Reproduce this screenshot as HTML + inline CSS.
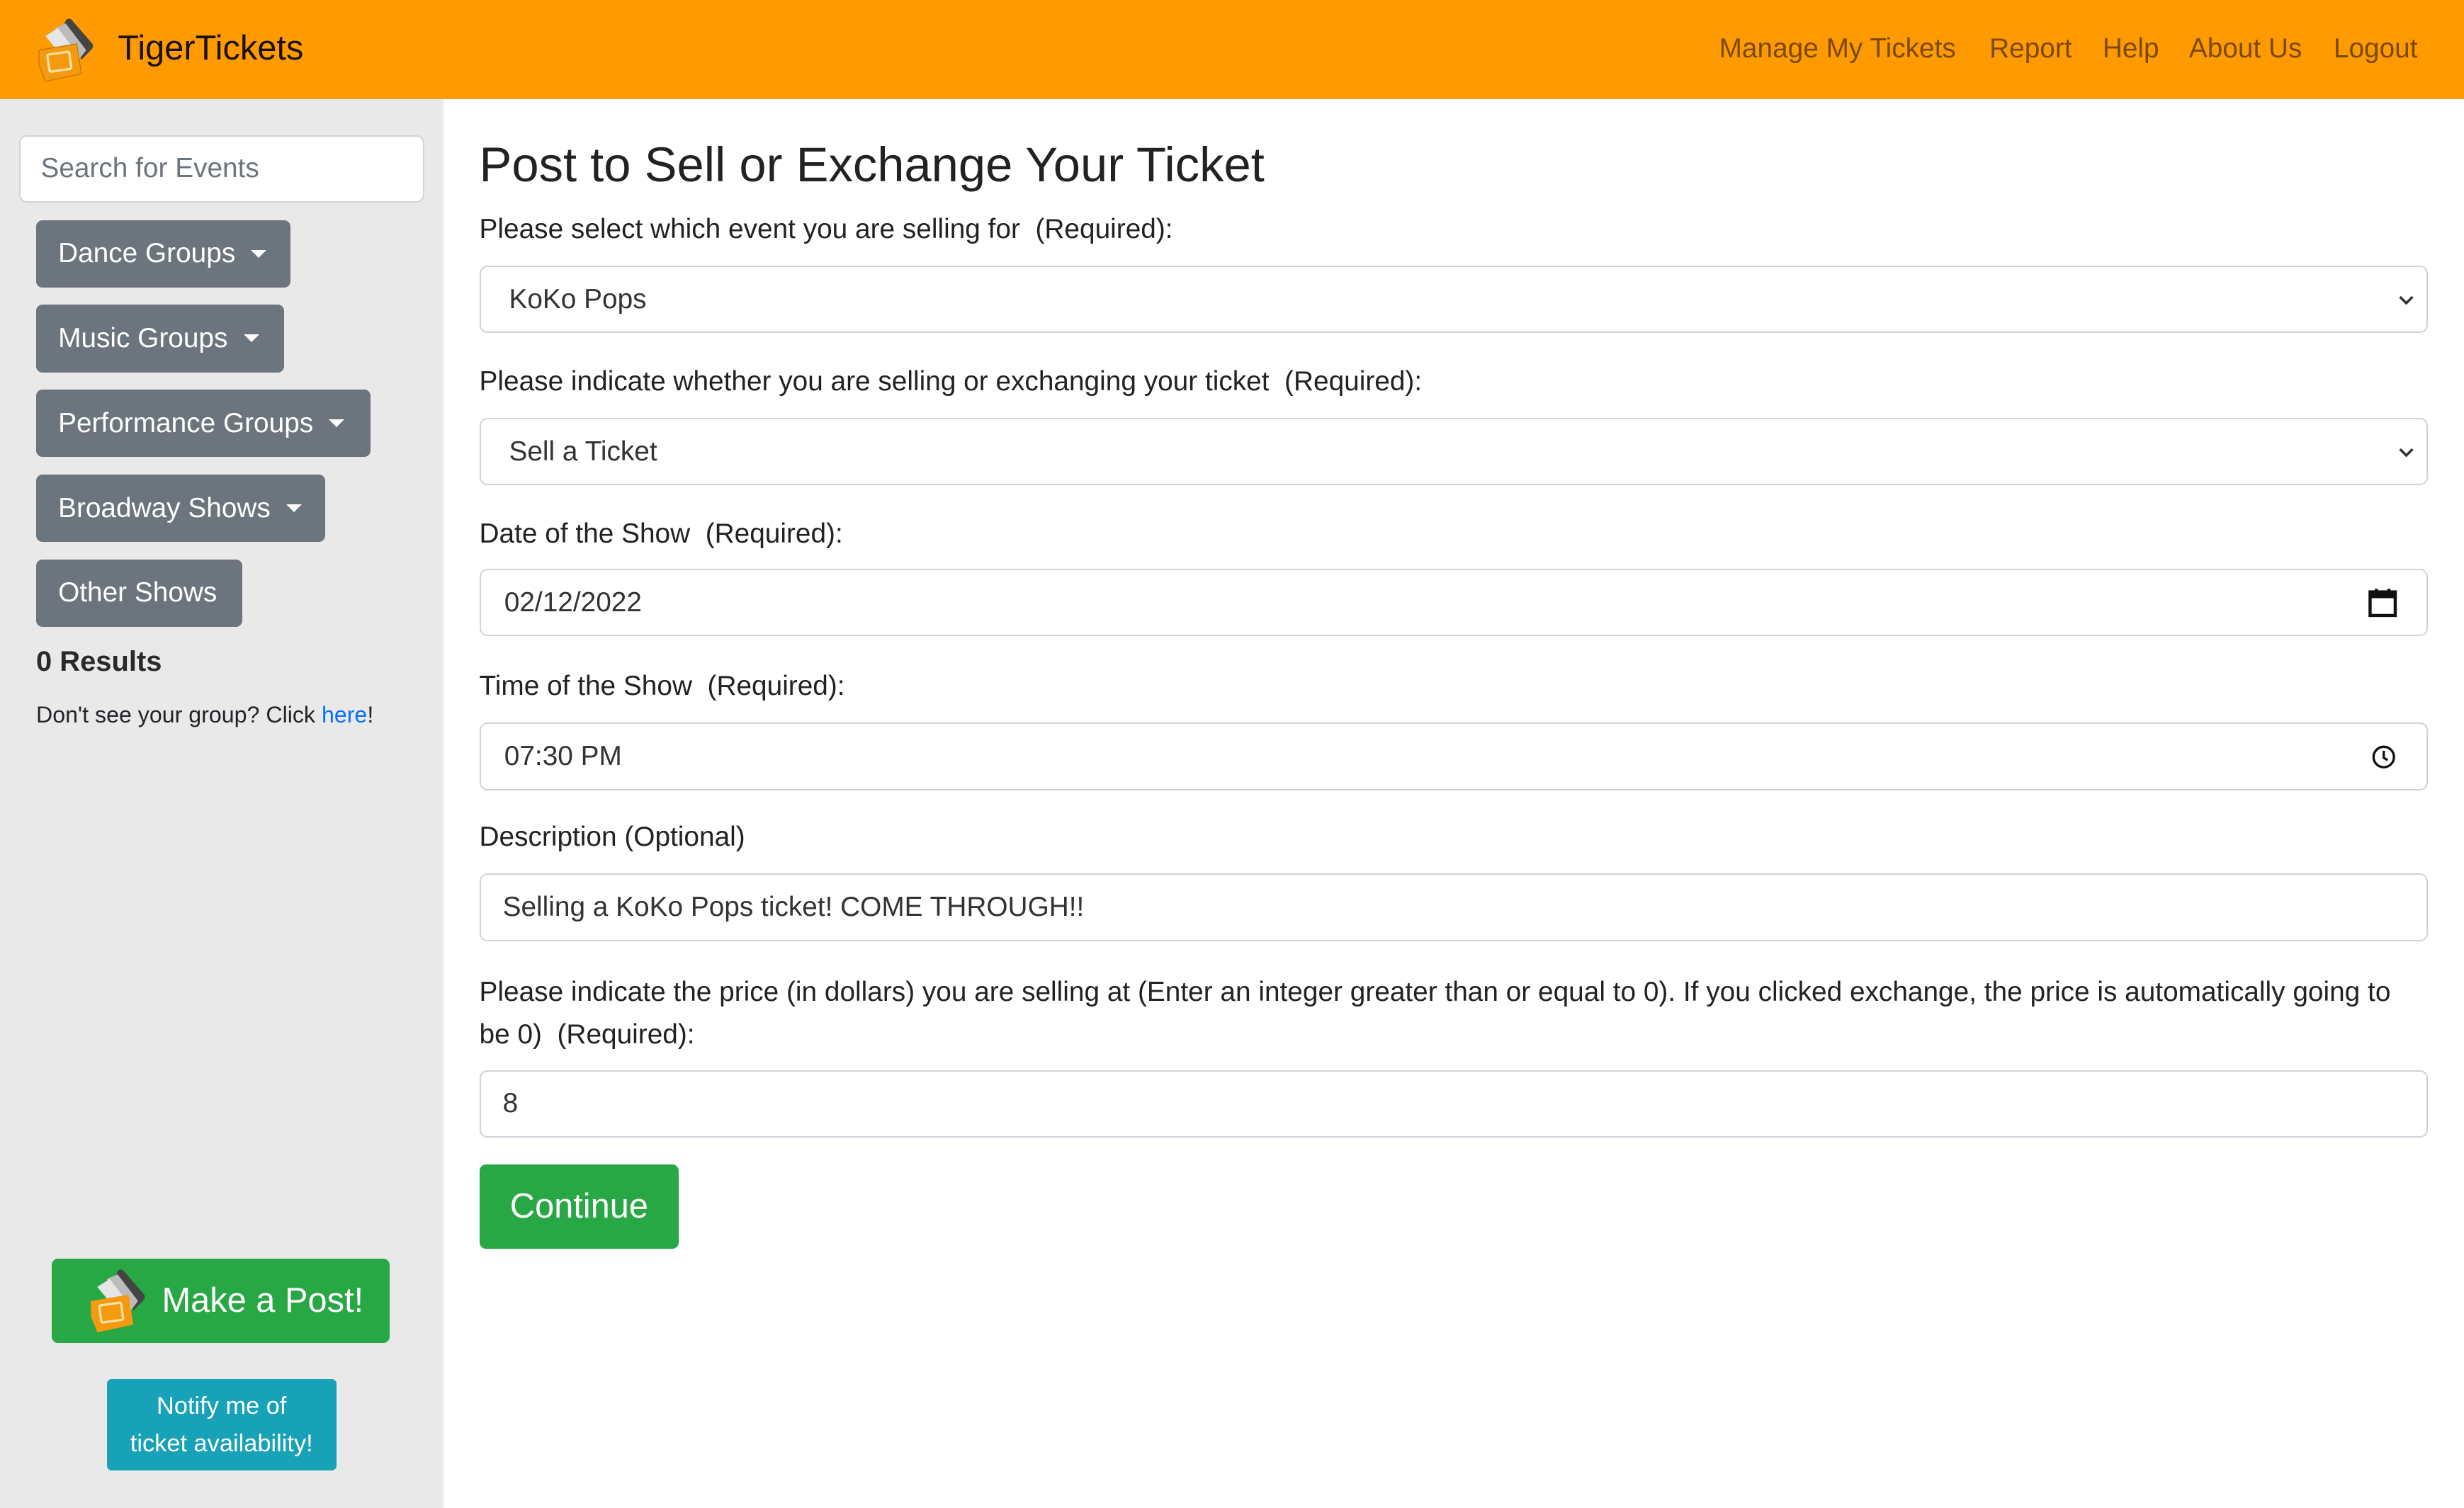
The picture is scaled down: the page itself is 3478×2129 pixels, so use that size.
<!DOCTYPE html>
<html><head><meta charset="utf-8"><style>
html,body{margin:0;padding:0;}
body{width:3478px;height:2128px;overflow:hidden;background:#fff;font-family:"Liberation Sans",sans-serif;}
#w{zoom:2.2181;width:1568px;height:960px;position:relative;color:#212529;}
.a{position:absolute;}
.hdr{left:0;top:0;width:1568px;height:63px;background:#ff9a00;}
.brand{left:75px;top:18px;font-size:22px;color:#1a1208;}
.nav{top:21px;font-size:17.5px;color:#7a4a00;}
.side{left:0;top:63px;width:282px;height:897px;background:#e9e9e9;}
.inp{background:#fff;border:1px solid #ced4da;border-radius:5px;box-sizing:border-box;font-size:17.5px;color:#333;padding-left:15px;display:flex;align-items:center;}
.btn{background:#6c757d;color:#fff;border-radius:4px;font-size:17.5px;height:43px;box-sizing:border-box;padding-left:14px;display:flex;align-items:center;}
.car{display:inline-block;border-left:5px solid transparent;border-right:5px solid transparent;border-top:5px solid #fff;margin-left:10px;}
.lbl{left:305px;font-size:17.5px;color:#222;}
.f{left:305px;width:1240px;height:43px;}
.chev{position:absolute;right:6px;top:14px;}
</style></head><body><div id="w">
<div class="a hdr"></div>
<svg class="a" style="left:20px;top:10px" width="42" height="44" viewBox="0 0 42 44">
<path d="M22 3 Q24 1 26 3 L39 18 Q40 20 38 22 L32 28 L20 8Z" fill="#444"/>
<path d="M15 8 L22 5 L35 22 L29 30 Z" fill="#bbb"/>
<path d="M9 13 L17 8 L31 26 L25 32Z" fill="#e6e6e6"/>
<path d="M5 22 L29 18 L32 37 L9 42 Q7 36 5 32 Z" fill="#f39a10" stroke="#c77800" stroke-width="0.6"/>
<rect x="11" y="24" width="14" height="11" rx="1" fill="none" stroke="#ffe0a0" stroke-width="1.5" transform="rotate(-8 17 30)"/>
</svg>
<div class="a brand">TigerTickets</div>
<div class="a nav" style="left:1094px">Manage My Tickets</div>
<div class="a nav" style="left:1266px">Report</div>
<div class="a nav" style="left:1338px">Help</div>
<div class="a nav" style="left:1393px">About Us</div>
<div class="a nav" style="left:1485px">Logout</div>
<div class="a side"></div>
<div class="a inp" style="left:12px;top:86px;width:258px;height:43px;padding-left:13px;color:#6c757d">Search for Events</div>
<div class="a btn" style="left:23px;top:140px;width:162px">Dance Groups<span class="car"></span></div>
<div class="a btn" style="left:23px;top:194px;width:158px">Music Groups<span class="car"></span></div>
<div class="a btn" style="left:23px;top:248px;width:213px">Performance Groups<span class="car"></span></div>
<div class="a btn" style="left:23px;top:302px;width:184px">Broadway Shows<span class="car"></span></div>
<div class="a btn" style="left:23px;top:356px;width:131px">Other Shows</div>
<div class="a" style="left:23px;top:411px;font-size:18px;font-weight:bold;color:#2a2a2a">0 Results</div>
<div class="a" style="left:23px;top:447px;font-size:14.5px">Don't see your group? Click <span style="color:#0d6efd">here</span>!</div>
<div class="a" style="left:33px;top:801px;width:215px;height:54px;background:#28a745;border-radius:4px"></div>
<svg class="a" style="left:52px;top:806px" width="44" height="44" viewBox="0 0 42 44">
<path d="M22 3 Q24 1 26 3 L39 18 Q40 20 38 22 L32 28 L20 8Z" fill="#444"/>
<path d="M15 8 L22 5 L35 22 L29 30 Z" fill="#bbb"/>
<path d="M9 13 L17 8 L31 26 L25 32Z" fill="#e6e6e6"/>
<path d="M5 22 L29 18 L32 37 L9 42 Q7 36 5 32 Z" fill="#f39a10"/>
<rect x="11" y="24" width="14" height="11" rx="1" fill="none" stroke="#ffe0a0" stroke-width="1.5" transform="rotate(-8 17 30)"/>
</svg>
<div class="a" style="left:103px;top:815px;font-size:22px;color:#fff">Make a Post!</div>
<div class="a" style="left:68px;top:878px;width:146px;height:58px;background:#17a2b8;border-radius:3px;color:#fff;font-size:15.5px;text-align:center;line-height:24px;padding-top:5px;box-sizing:border-box">Notify me of<br>ticket availability!</div>

<div class="a" style="left:305px;top:87px;font-size:31px;font-weight:500;color:#222">Post to Sell or Exchange Your Ticket</div>
<div class="a lbl" style="top:136px">Please select which event you are selling for &nbsp;(Required):</div>
<div class="a inp f" style="top:169px;padding-left:18px">KoKo Pops<svg class="chev" width="14" height="14" viewBox="0 0 14 14"><path d="M3 5l4 4 4-4" fill="none" stroke="#333" stroke-width="1.6"/></svg></div>
<div class="a lbl" style="top:233px">Please indicate whether you are selling or exchanging your ticket &nbsp;(Required):</div>
<div class="a inp f" style="top:266px;padding-left:18px">Sell a Ticket<svg class="chev" width="14" height="14" viewBox="0 0 14 14"><path d="M3 5l4 4 4-4" fill="none" stroke="#333" stroke-width="1.6"/></svg></div>
<div class="a lbl" style="top:330px">Date of the Show &nbsp;(Required):</div>
<div class="a inp f" style="top:362px">02/12/2022<svg class="a" style="right:18px;top:11px" width="20" height="20" viewBox="0 0 20 20"><rect x="2" y="3" width="16" height="15" fill="none" stroke="#111" stroke-width="2"/><rect x="2" y="3" width="16" height="4" fill="#111"/><path d="M6 1v3M14 1v3" stroke="#111" stroke-width="2"/></svg></div>
<div class="a lbl" style="top:427px">Time of the Show &nbsp;(Required):</div>
<div class="a inp f" style="top:460px">07:30 PM<svg class="a" style="right:19px;top:13px" width="16" height="16" viewBox="0 0 16 16"><circle cx="8" cy="8" r="6.5" fill="none" stroke="#111" stroke-width="1.5"/><path d="M8 4v4.5l2.5 1.5" fill="none" stroke="#111" stroke-width="1.5"/></svg></div>
<div class="a lbl" style="top:523px">Description (Optional)</div>
<div class="a inp f" style="top:556px;padding-left:14px">Selling a KoKo Pops ticket! COME THROUGH!!</div>
<div class="a lbl" style="top:618px;width:1236px;line-height:27px">Please indicate the price (in dollars) you are selling at (Enter an integer greater than or equal to 0). If you clicked exchange, the price is automatically going to be 0) &nbsp;(Required):</div>
<div class="a inp f" style="top:681px;padding-left:14px">8</div>
<div class="a" style="left:305px;top:741px;width:127px;height:54px;background:#28a745;border-radius:4px;color:#fff;font-size:22px;display:flex;align-items:center;justify-content:center">Continue</div>
</div></body></html>
